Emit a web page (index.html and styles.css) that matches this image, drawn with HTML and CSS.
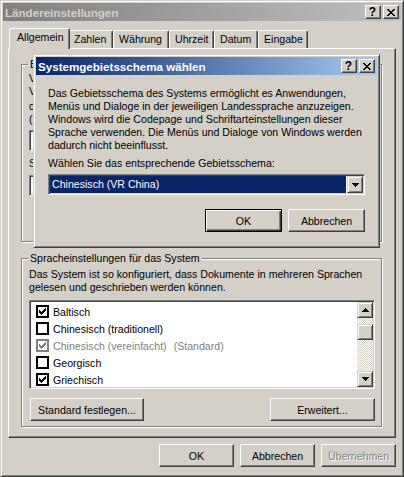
FILE: index.html
```html
<!DOCTYPE html>
<html lang="de">
<head>
<meta charset="utf-8">
<title>Ländereinstellungen</title>
<link rel="stylesheet" href="styles.css">
</head>
<body>
<div class="window">
  <div class="titlebar inactive">
    <span class="title">Ländereinstellungen</span>
    <div class="tbtns">
      <span class="tbtn help">?</span>
      <span class="tbtn"><svg class="glyph" width="8" height="7" viewBox="0 0 8 7"><path d="M0 0h2v1H0zM6 0h2v1H6zM1 1h2v1H1zM5 1h2v1H5zM2 2h4v1H2zM3 3h2v1H3zM2 4h4v1H2zM1 5h2v1H1zM5 5h2v1H5zM0 6h2v1H0zM6 6h2v1H6z"/></svg></span>
    </div>
  </div>
  <div class="client">
    <div class="tabs">
      <div class="tab sel t-allg">Allgemein</div>
      <div class="tab t-zahl">Zahlen</div>
      <div class="tab t-waeh">Währung</div>
      <div class="tab t-uhr">Uhrzeit</div>
      <div class="tab t-dat">Datum</div>
      <div class="tab t-ein">Eingabe</div>
    </div>
    <div class="panel">
      <div class="group g1">
        <div class="legend">Benutzer</div>
        <p class="text g1-p1">Viele<br>Verwenden</p>
        <p class="text g1-p2">der<br>(Standort):</p>
        <div class="combo g1-combo"><span class="combo-val">Deutsch</span><span class="dd"><svg class="glyph" width="7" height="4" viewBox="0 0 7 4"><path d="M0 0h7v1H0zM1 1h5v1H1zM2 2h3v1H2zM3 3h1v1H3z"/></svg></span></div>
        <p class="text g1-p3">Sprache</p>
        <div class="combo g1-combo g1-combo2"><span class="combo-val">Deutsch</span><span class="dd"><svg class="glyph" width="7" height="4" viewBox="0 0 7 4"><path d="M0 0h7v1H0zM1 1h5v1H1zM2 2h3v1H2zM3 3h1v1H3z"/></svg></span></div>
      </div>
      <div class="group g2">
        <div class="legend">Spracheinstellungen für das System</div>
        <p class="text intro">Das System ist so konfiguriert, dass Dokumente in mehreren Sprachen<br>gelesen und geschrieben werden können.</p>
        <div class="listbox">
          <div class="items">
            <div class="item"><span class="cb"><svg class="glyph" width="7" height="7" viewBox="0 0 7 7"><path d="M6 0h1v1H6zM5 1h2v1H5zM0 2h1v1H0zM4 2h3v1H4zM0 3h2v1H0zM3 3h3v1H3zM0 4h5v1H0zM1 5h3v1H1zM2 6h1v1H2z"/></svg></span>Baltisch</div>
            <div class="item"><span class="cb"></span>Chinesisch (traditionell)</div>
            <div class="item grey"><span class="cb"><svg class="glyph" width="7" height="7" viewBox="0 0 7 7"><path d="M6 0h1v1H6zM5 1h2v1H5zM0 2h1v1H0zM4 2h3v1H4zM0 3h2v1H0zM3 3h3v1H3zM0 4h5v1H0zM1 5h3v1H1zM2 6h1v1H2z"/></svg></span>Chinesisch (vereinfacht)<span class="std">(Standard)</span></div>
            <div class="item"><span class="cb"></span>Georgisch</div>
            <div class="item"><span class="cb"><svg class="glyph" width="7" height="7" viewBox="0 0 7 7"><path d="M6 0h1v1H6zM5 1h2v1H5zM0 2h1v1H0zM4 2h3v1H4zM0 3h2v1H0zM3 3h3v1H3zM0 4h5v1H0zM1 5h3v1H1zM2 6h1v1H2z"/></svg></span>Griechisch</div>
          </div>
          <div class="scrollbar">
            <div class="raised sb-btn"><svg class="glyph" width="7" height="4" viewBox="0 0 7 4"><path d="M3 0h1v1H3zM2 1h3v1H2zM1 2h5v1H1zM0 3h7v1H0z"/></svg></div>
            <div class="sb-track"><div class="raised sb-thumb"></div></div>
            <div class="raised sb-btn"><svg class="glyph" width="7" height="4" viewBox="0 0 7 4"><path d="M0 0h7v1H0zM1 1h5v1H1zM2 2h3v1H2zM3 3h1v1H3z"/></svg></div>
          </div>
        </div>
        <div class="group-actions">
          <button class="btn b-std">Standard festlegen...</button>
          <button class="btn b-erw">Erweitert...</button>
        </div>
      </div>
    </div>
    <div class="actions">
      <button class="btn b-main">OK</button>
      <button class="btn b-main">Abbrechen</button>
      <button class="btn b-main disabled">Übernehmen</button>
    </div>
  </div>

  <div class="dialog">
    <div class="titlebar active">
      <span class="title">Systemgebietsschema wählen</span>
      <div class="tbtns">
        <span class="tbtn help">?</span>
        <span class="tbtn"><svg class="glyph" width="8" height="7" viewBox="0 0 8 7"><path d="M0 0h2v1H0zM6 0h2v1H6zM1 1h2v1H1zM5 1h2v1H5zM2 2h4v1H2zM3 3h2v1H3zM2 4h4v1H2zM1 5h2v1H1zM5 5h2v1H5zM0 6h2v1H0zM6 6h2v1H6z"/></svg></span>
      </div>
    </div>
    <div class="dialog-body">
      <p class="text">Das Gebietsschema des Systems ermöglicht es Anwendungen,<br>Menüs und Dialoge in der jeweiligen Landessprache anzuzeigen.<br>Windows wird die Codepage und Schriftarteinstellungen dieser<br>Sprache verwenden. Die Menüs und Dialoge von Windows werden<br>dadurch nicht beeinflusst.</p>
      <p class="text d-label">Wählen Sie das entsprechende Gebietsschema:</p>
      <div class="combo d-combo"><span class="combo-val selected">Chinesisch (VR China)</span><span class="dd"><svg class="glyph" width="7" height="4" viewBox="0 0 7 4"><path d="M0 0h7v1H0zM1 1h5v1H1zM2 2h3v1H2zM3 3h1v1H3z"/></svg></span></div>
      <div class="d-actions">
        <button class="btn b-dlg default">OK</button>
        <button class="btn b-dlg">Abbrechen</button>
      </div>
    </div>
  </div>
</div>
</body>
</html>
```
FILE: styles.css
```css
* { box-sizing: border-box; }
html, body { margin: 0; padding: 0; }
body {
  width: 404px;
  height: 477px;
  overflow: hidden;
  background: #d4d0c8;
  font-family: "Liberation Sans", Arial, sans-serif;
  font-size: 10.6px;
  color: #000;
}

.window {
  position: relative;
  width: 404px;
  height: 477px;
  display: flex;
  flex-direction: column;
  background: #d4d0c8;
  border: 1px solid;
  border-color: #d4d0c8 #404040 #404040 #d4d0c8;
  box-shadow: inset 1px 1px #fff, inset -1px -1px #808080;
  padding: 2px;
}

/* title bars */
.titlebar {
  flex: none;
  height: 18px;
  display: flex;
  align-items: center;
  justify-content: space-between;
  padding: 0 2px 0 2px;
}
.titlebar.inactive { background: linear-gradient(to right, #808080, #c0c0c0); color: #d4d0c8; }
.titlebar.active { background: linear-gradient(to right, #0a246a, #a6caf0); color: #fff; }
.title { font-weight: bold; font-size: 11.6px; white-space: nowrap; }
.tbtns { display: flex; gap: 2px; }
.tbtn {
  width: 16px;
  height: 14px;
  display: flex;
  align-items: center;
  justify-content: center;
  background: #d4d0c8;
  color: #000;
  border: 1px solid;
  border-color: #fff #404040 #404040 #fff;
  box-shadow: inset -1px -1px #808080;
}
.tbtn.help { font-weight: bold; font-size: 12px; line-height: 12px; padding-right: 1px; }
.glyph { display: block; fill: currentColor; shape-rendering: crispEdges; }

/* client area */
.client {
  flex: 1;
  display: flex;
  flex-direction: column;
  padding: 7px 5px 7px 5px;
}

.tabs {
  position: relative;
  z-index: 1;
  height: 20px;
  display: flex;
  align-items: flex-end;
  padding-left: 3px;
}
.tab {
  height: 18px;
  padding: 2px 0 0 5px;
  line-height: 13px;
  white-space: nowrap;
  background: #d4d0c8;
  border: 1px solid;
  border-bottom: none;
  border-color: #fff #404040 transparent #fff;
  border-radius: 2px 2px 0 0;
  box-shadow: inset -1px 0 #808080;
}
.tab.sel {
  position: relative;
  z-index: 2;
  height: 21px;
  margin: 0 -2px -1px -2px;
  padding-left: 7px;
}
.t-allg { width: 61px; }
.t-zahl { width: 45px; }
.t-waeh { width: 56px; }
.t-uhr { width: 45px; }
.t-dat { width: 44px; }
.t-ein { width: 50px; }

.panel {
  height: 390px;
  display: flex;
  flex-direction: column;
  border: 1px solid;
  border-color: #fff #404040 #404040 #fff;
  box-shadow: inset -1px -1px #808080;
  padding: 15px 13px 10px 12px;
}

.group {
  display: flex;
  flex-direction: column;
  align-items: flex-start;
  border: 1px solid #808080;
  box-shadow: inset 1px 1px #fff, 1px 1px #fff;
  padding: 0 6px 0 7px;
}
.g1 { height: 178px; }
.g2 { height: 169px; margin-top: 16px; }
.legend {
  margin: -7px 0 0 -1px;
  padding: 0 2px;
  line-height: 13px;
  background: #d4d0c8;
  white-space: nowrap;
}

.text { margin: 0; line-height: 13px; white-space: nowrap; }
.g1-p1 { margin-top: 1px; }
.g1-p2 { margin-top: 2px; }
.g1-p3 { margin-top: 6px; }
.g1-combo { width: 240px; margin-top: 4px; }
.g1-combo2 { margin-top: 5px; }
.intro { margin-top: 3px; }

/* combobox */
.combo {
  height: 21px;
  display: flex;
  background: #fff;
  border: 1px solid;
  border-color: #808080 #fff #fff #808080;
  box-shadow: inset 1px 1px #404040, inset -1px -1px #d4d0c8;
  padding: 1px;
}
.combo-val {
  flex: 1;
  padding-left: 2px;
  line-height: 17px;
  white-space: nowrap;
  overflow: hidden;
}
.combo-val.selected { background: #0a246a; color: #fff; margin-right: 1px; }
.dd,
.raised {
  display: flex;
  align-items: center;
  justify-content: center;
  background: #d4d0c8;
  color: #000;
  border: 1px solid;
  border-color: #d4d0c8 #404040 #404040 #d4d0c8;
  box-shadow: inset 1px 1px #fff, inset -1px -1px #808080;
}
.dd { width: 16px; height: 17px; }

/* listbox */
.listbox {
  width: 346px;
  height: 89px;
  margin-top: 6px;
  display: flex;
  background: #fff;
  border: 1px solid;
  border-color: #808080 #fff #fff #808080;
  box-shadow: inset 1px 1px #404040, inset -1px -1px #d4d0c8;
  padding: 1px;
}
.items { flex: 1; padding: 1px 0 0 5px; overflow: hidden; }
.item {
  height: 17px;
  display: flex;
  align-items: center;
  gap: 4px;
  white-space: nowrap;
}
.cb {
  flex: none;
  width: 13px;
  height: 13px;
  border: 2px solid #000;
  background: #fff;
  display: flex;
  align-items: center;
  justify-content: center;
  color: #000;
}
.item.grey { color: #808080; }
.item.grey .cb { border-color: #808080; color: #808080; }
.std { margin-left: 3px; }

.scrollbar { width: 16px; display: flex; flex-direction: column; }
.sb-btn { height: 16px; flex: none; }
.sb-track {
  flex: 1;
  padding-top: 6px;
  background-color: #fff;
  background-image: conic-gradient(#d4d0c8 25%, #fff 0 50%, #d4d0c8 0 75%, #fff 0);
  background-size: 2px 2px;
}
.sb-thumb { height: 16px; }

/* buttons */
.btn {
  height: 23px;
  padding: 0;
  font: inherit;
  color: #000;
  background: #d4d0c8;
  border: 1px solid;
  border-color: #fff #404040 #404040 #fff;
  box-shadow: inset -1px -1px #808080;
  display: flex;
  align-items: center;
  justify-content: center;
  white-space: nowrap;
}
.btn.default {
  border-color: #000;
  box-shadow: inset 1px 1px #fff, inset -1px -1px #404040, inset -2px -2px #808080;
}
.btn.disabled { color: #808080; text-shadow: 1px 1px #fff; }

.group-actions {
  align-self: stretch;
  width: 346px;
  margin-top: 9px;
  display: flex;
  justify-content: space-between;
}
.b-std { width: 114px; margin-left: 1px; }
.b-erw { width: 105px; }

.actions {
  margin-top: 6px;
  display: flex;
  justify-content: flex-end;
  gap: 6px;
}
.b-main { width: 75px; }

/* dialog */
.dialog {
  position: absolute;
  left: 32px;
  top: 53px;
  width: 347px;
  height: 194px;
  display: flex;
  flex-direction: column;
  background: #d4d0c8;
  border: 1px solid;
  border-color: #d4d0c8 #404040 #404040 #d4d0c8;
  box-shadow: inset 1px 1px #fff, inset -1px -1px #808080;
  padding: 2px;
}
.dialog-body { padding: 12px 12px 0 12px; }
.d-label { margin-top: 5px; }
.d-combo { margin-top: 4px; }
.d-actions {
  margin-top: 14px;
  display: flex;
  justify-content: flex-end;
  gap: 6px;
}
.b-dlg { width: 77px; }
```
